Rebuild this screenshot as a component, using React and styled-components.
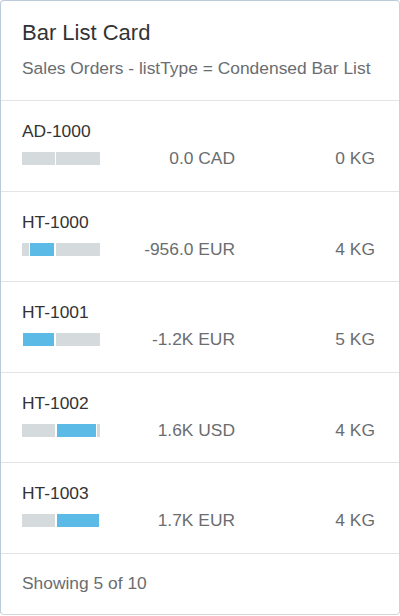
import React from "react"
import styled, { createGlobalStyle } from "styled-components"

const GlobalStyle = createGlobalStyle`
	html, body {
		margin: 0;
		padding: 0;
		background: #ffffff;
	}
	body {
		font-family: "Liberation Sans", Arial, sans-serif;
	}
`

const NEG_WIDTH = 33
const POS_WIDTH = 44
const NEG_MAX = 1200
const POS_MAX = 1700

const items = [
	{ name: "AD-1000", amount: 0, value: "0.0 CAD", weight: "0 KG" },
	{ name: "HT-1000", amount: -956, value: "-956.0 EUR", weight: "4 KG" },
	{ name: "HT-1001", amount: -1200, value: "-1.2K EUR", weight: "5 KG" },
	{ name: "HT-1002", amount: 1600, value: "1.6K USD", weight: "4 KG" },
	{ name: "HT-1003", amount: 1700, value: "1.7K EUR", weight: "4 KG" },
]

function Bar({ amount }) {
	const neg = amount < 0 ? (Math.abs(amount) / NEG_MAX) * NEG_WIDTH : 0
	const pos = amount > 0 ? (amount / POS_MAX) * POS_WIDTH : 0
	return (
		<Track>
			<Half $width={NEG_WIDTH} $align="flex-end">
				{neg > 0 && <Fill style={{ width: `${neg}px` }} />}
			</Half>
			<Divider />
			<Half $width={POS_WIDTH} $align="flex-start">
				{pos > 0 && <Fill style={{ width: `${pos}px` }} />}
			</Half>
		</Track>
	)
}

function App() {
	return (
		<>
			<GlobalStyle />
			<Card>
				<Header>
					<Title>Bar List Card</Title>
					<Subtitle>Sales Orders - listType = Condensed Bar List</Subtitle>
				</Header>
				{items.map((item) => (
					<Row key={item.name}>
						<Name>{item.name}</Name>
						<Line>
							<Bar amount={item.amount} />
							<Value>{item.value}</Value>
							<Value>{item.weight}</Value>
						</Line>
					</Row>
				))}
				<Footer>Showing 5 of 10</Footer>
			</Card>
		</>
	)
}

const Card = styled.div`
	box-sizing: border-box;
	width: 400px;
	height: 615px;
	background: #ffffff;
	border: 1px solid #bccbda;
	border-bottom-color: #d3d6d9;
	border-right-color: #c9d2db;
	border-radius: 4px;
	display: flex;
	flex-direction: column;
	color: #32363a;
`

const Header = styled.div`
	padding: 19px 21px 21px;
	border-bottom: 1px solid #e2e4e6;
	display: flex;
	flex-direction: column;
	gap: 12px;
`

const Title = styled.div`
	font-size: 22px;
	line-height: 26px;
	color: #333333;
`

const Subtitle = styled.div`
	font-size: 17.4px;
	line-height: 21px;
	color: #6a6d70;
	white-space: nowrap;
`

const Row = styled.div`
	padding: 20px 24px 21.6px 21px;
	border-bottom: 1px solid #e2e4e6;
	display: flex;
	flex-direction: column;
	gap: 6px;
`

const Name = styled.div`
	font-size: 17.4px;
	line-height: 21px;
	color: #333333;
`

const Line = styled.div`
	display: grid;
	grid-template-columns: 78px 135px 1fr;
	align-items: center;
	font-size: 17.4px;
	line-height: 21px;
`

const Value = styled.div`
	text-align: right;
	color: #6a6d70;
	white-space: nowrap;
`

const Track = styled.div`
	display: flex;
	height: 13px;
	width: 78px;
`

const Half = styled.div`
	display: flex;
	justify-content: ${(p) => p.$align};
	width: ${(p) => p.$width}px;
	background: #d5dadd;
`

const Divider = styled.div`
	width: 1px;
	background: #ffffff;
`

const Fill = styled.div`
	box-sizing: border-box;
	height: 100%;
	background: #5cbae6;
	border-left: 1px solid #ffffff;
	border-right: 1px solid #ffffff;
`

const Footer = styled.div`
	padding: 19px 21px 20px;
	font-size: 17.4px;
	line-height: 21px;
	color: #6a6d70;
`

export default App
